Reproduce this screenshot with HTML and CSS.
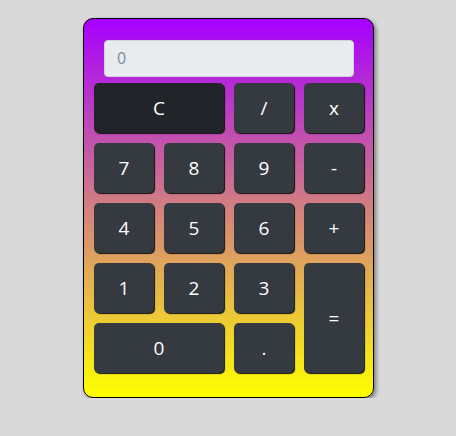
FILE: index.html
```html
<!DOCTYPE html>
<html>
<head>
<meta charset="utf-8">
<link rel="stylesheet" href="styles.css">
</head>
<body>
<div class="calc">
  <div class="display">0</div>
  <div class="keys">
    <button class="key wide dark">C</button>
    <button class="key">/</button>
    <button class="key">x</button>
    <button class="key">7</button>
    <button class="key">8</button>
    <button class="key">9</button>
    <button class="key">-</button>
    <button class="key">4</button>
    <button class="key">5</button>
    <button class="key">6</button>
    <button class="key">+</button>
    <button class="key">1</button>
    <button class="key">2</button>
    <button class="key">3</button>
    <button class="key tall">=</button>
    <button class="key wide">0</button>
    <button class="key">.</button>
  </div>
</div>
</body>
</html>
```
FILE: styles.css
```css
html, body {
  margin: 0;
  background: #d9d9d9;
  font-family: "Open Sans", "Noto Sans", sans-serif;
}
body {
  padding: 18px 0 0 1px;
}
.calc {
  box-sizing: border-box;
  width: 291px;
  height: 380px;
  margin: 0 auto;
  border: 1px solid #000;
  border-radius: 10px;
  background: linear-gradient(#a600ff, #ffff00);
  box-shadow: 2px 2px 4px rgba(0, 0, 0, 0.45);
  padding: 21px 7px 24px 10px;
  display: flex;
  flex-direction: column;
  gap: 6px;
}
.display {
  box-sizing: border-box;
  height: 37px;
  margin: 0 12px 0 10px;
  background: #e9ecef;
  border: 1px solid #ced4da;
  border-radius: 4px;
  padding-left: 12px;
  color: #7d8a97;
  font-size: 16px;
  line-height: 35px;
}
.keys {
  display: grid;
  grid-template-columns: repeat(4, 60px);
  grid-template-rows: repeat(5, 50px);
  column-gap: 10px;
  row-gap: 10px;
}
.key {
  margin: 0;
  padding: 0;
  border: none;
  border-radius: 5px;
  background: #343a40;
  color: #ffffff;
  font-family: "Open Sans", "Noto Sans", sans-serif;
  font-size: 19px;
  font-weight: 400;
  box-shadow: 1px 1px 1px #111;
}
.dark {
  background: #212529;
}
.wide {
  grid-column: span 2;
}
.tall {
  grid-row: span 2;
}
```
